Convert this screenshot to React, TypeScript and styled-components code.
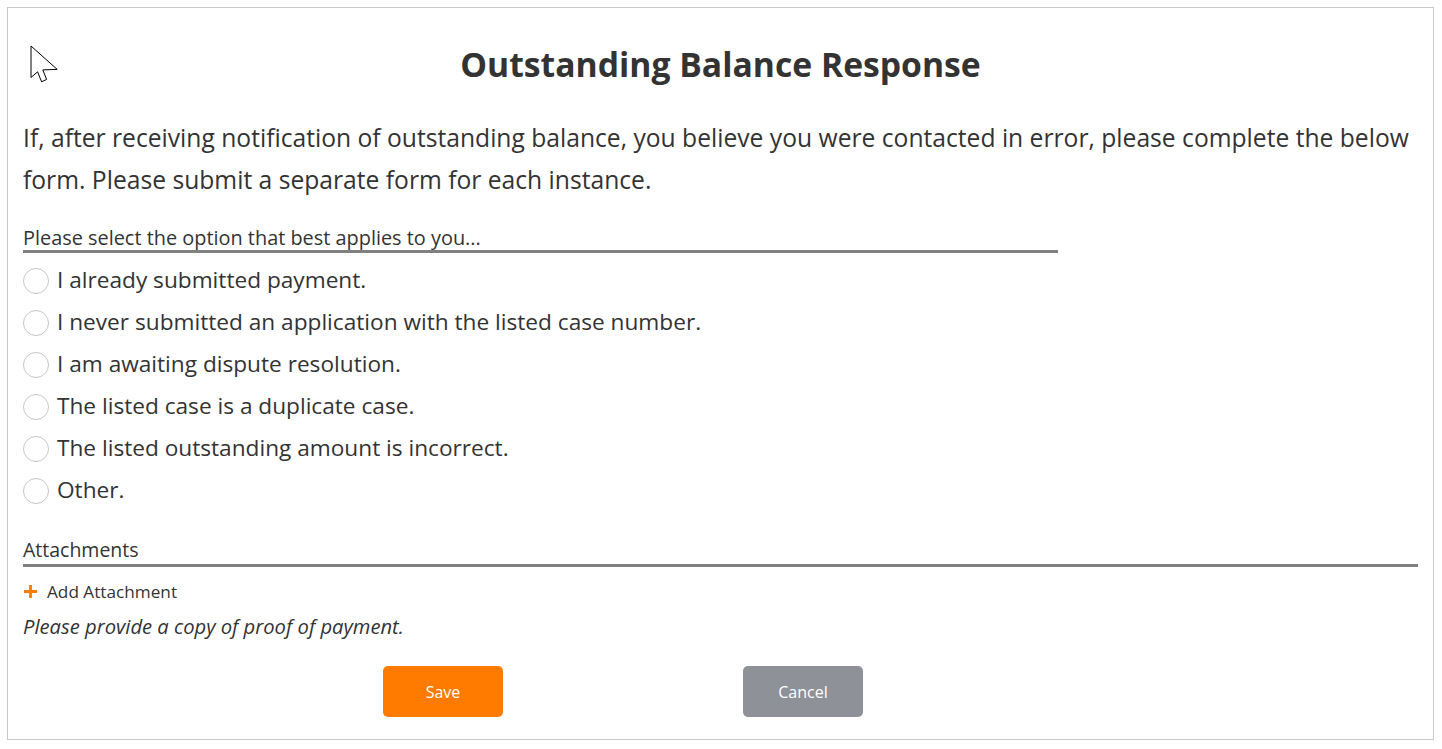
import React from "react";
import styled, { createGlobalStyle } from "styled-components";

const Global = createGlobalStyle`
  html, body { margin: 0; padding: 0; background: #ffffff; }
  body { font-family: "Open Sans", "Noto Sans", sans-serif; color: #333333; }
  * { box-sizing: border-box; }
`;

const Frame = styled.div`
  position: relative;
  margin: 7px;
  width: 1427px;
  height: 733px;
  border: 1px solid #c8c8c8;
  padding: 0 15px;
`;

const Title = styled.h1`
  margin: 0;
  padding-top: 31px;
  height: 109px;
  text-align: center;
  font-size: 33.7px;
  line-height: 50px;
  font-weight: 700;
  color: #333333;
`;

const Intro = styled.p`
  margin: 0;
  font-size: 24.65px;
  line-height: 42px;
  color: #333333;
`;

const SectionLabel = styled.div<{ $width?: string; $top: number; $size: number; $lh: number; $pad: number }>`
  margin-top: ${(p) => p.$top}px;
  width: ${(p) => p.$width ?? "100%"};
  font-size: ${(p) => p.$size}px;
  line-height: ${(p) => p.$lh}px;
  padding-bottom: ${(p) => p.$pad}px;
  border-bottom: 3px solid #808080;
  color: #333333;
  white-space: nowrap;
`;

const Options = styled.div`
  display: flex;
  flex-direction: column;
  padding-top: 5px;
`;

const OptionRow = styled.label`
  display: flex;
  align-items: center;
  height: 42px;
  gap: 8px;
  font-size: 22.65px;
  color: #333333;
`;

const Radio = styled.span`
  width: 26px;
  height: 26px;
  border-radius: 50%;
  border: 1px solid #c6c6c6;
  background: #ffffff;
  flex-shrink: 0;
  margin-top: 3px;
`;

const AddLink = styled.div`
  display: flex;
  align-items: center;
  gap: 9px;
  margin-top: 13px;
  height: 22px;
  font-size: 17.2px;
  color: #333333;
`;

const Hint = styled.div`
  margin-top: 11px;
  font-size: 20.2px;
  line-height: 26px;
  font-style: italic;
  color: #333333;
`;

const Buttons = styled.div`
  display: flex;
  gap: 240px;
  padding-left: 360px;
  margin-top: 27px;
`;

const Button = styled.button<{ $bg: string }>`
  width: 120px;
  height: 51px;
  border: none;
  border-radius: 5px;
  background: ${(p) => p.$bg};
  color: #ffffff;
  font-family: "Open Sans", "Noto Sans", sans-serif;
  font-size: 16px;
`;

const Cursor = styled.svg`
  position: absolute;
  left: 22px;
  top: 37px;
`;

const options = [
  "I already submitted payment.",
  "I never submitted an application with the listed case number.",
  "I am awaiting dispute resolution.",
  "The listed case is a duplicate case.",
  "The listed outstanding amount is incorrect.",
  "Other.",
];

export default function App() {
  return (
    <>
      <Global />
      <Frame>
        <Cursor width="30" height="40" viewBox="0 0 30 40">
          <path
            d="M1 1 L1 32.5 L7.6 26.8 L11.6 36.8 L16.6 34.4 L12.8 24.9 L27.2 24.4 Z"
            fill="#ffffff"
            stroke="#000000"
            strokeWidth="1"
            strokeLinejoin="miter"
          />
        </Cursor>
        <Title>Outstanding Balance Response</Title>
        <Intro>
          If, after receiving notification of outstanding balance, you believe you were contacted in error, please
          complete the below form. Please submit a separate form for each instance.
        </Intro>
        <SectionLabel $width="1035px" $top={25} $size={19.9} $lh={24} $pad={0}>
          Please select the option that best applies to you...
        </SectionLabel>
        <Options>
          {options.map((o) => (
            <OptionRow key={o}>
              <Radio />
              {o}
            </OptionRow>
          ))}
        </Options>
        <SectionLabel $top={27} $size={19.5} $lh={26} $pad={1}>
          Attachments
        </SectionLabel>
        <AddLink>
          <svg width="15" height="15" viewBox="0 0 15 15">
            <path d="M7.5 1 V14 M1 7.5 H14" stroke="#ff7b00" strokeWidth="2.8" />
          </svg>
          Add Attachment
        </AddLink>
        <Hint>Please provide a copy of proof of payment.</Hint>
        <Buttons>
          <Button $bg="#ff7b00">Save</Button>
          <Button $bg="#8e9198">Cancel</Button>
        </Buttons>
      </Frame>
    </>
  );
}
